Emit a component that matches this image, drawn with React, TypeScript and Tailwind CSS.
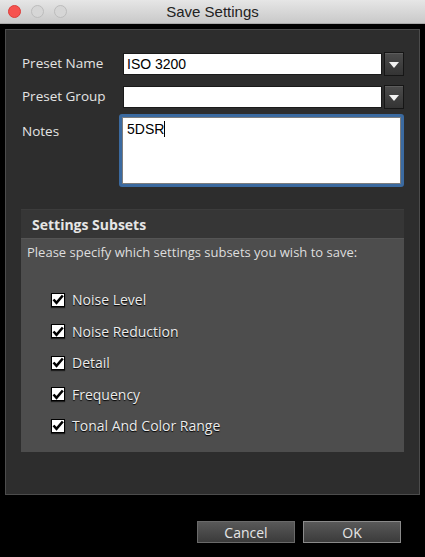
import React from 'react';

const subsets = ['Noise Level', 'Noise Reduction', 'Detail', 'Frequency', 'Tonal And Color Range'];

// Little white triangle on the dark combo buttons
function ComboButton() {
  return (
    <div className="w-[20px] h-[24px] flex items-center justify-center border border-[#161616] bg-gradient-to-b from-[#4c4c4c] to-[#343434] shadow-[inset_0_1px_0_#5c5c5c]">
      <svg width="10" height="6" viewBox="0 0 10 6" className="mt-[2px]">
        <path d="M0 0 H10 L5 6 Z" fill="#f2f2f2" />
      </svg>
    </div>
  );
}

function CheckBox() {
  return (
    <div className="w-[14px] h-[14px] bg-white border border-black shadow-[0_1px_1px_rgba(0,0,0,0.6)] flex items-center justify-center">
      <svg width="12" height="11" viewBox="0 0 12 11">
        <path d="M1.5 5.5 L4.5 8.8 L10.8 1.5" fill="none" stroke="#000" strokeWidth="2.6" strokeLinejoin="miter" />
      </svg>
    </div>
  );
}

function WinButton({ label, primary }: { label: string; primary?: boolean }) {
  return (
    <button
      className={`w-[98px] h-[22px] flex items-center justify-center text-[14px] text-[#e6e6e6] bg-gradient-to-b from-[#595959] to-[#3b3b3b] border ${
        primary ? 'border-[#8a8a8a]' : 'border-[#6a6a6a]'
      }`}
      style={{ fontFamily: '"Open Sans", sans-serif' }}
    >
      {label}
    </button>
  );
}

export default function App() {
  return (
    <div className="w-[425px] h-[557px] bg-black flex flex-col overflow-hidden" style={{ fontFamily: '"Open Sans", sans-serif' }}>
      {/* Title bar */}
      <div className="h-[24px] grid grid-cols-[1fr_auto_1fr] items-center bg-gradient-to-b from-[#e6e6e6] to-[#c9c9c9] border-b border-[#a9a9a9]">
        <div className="flex items-center gap-[10px] pl-[8px]">
          <div className="w-[13px] h-[13px] rounded-full bg-[#f6524e] border border-[#dc3e3a]" />
          <div className="w-[13px] h-[13px] rounded-full bg-[#d6d6d6] border border-[#bcbcbc]" />
          <div className="w-[13px] h-[13px] rounded-full bg-[#d6d6d6] border border-[#bcbcbc]" />
        </div>
        <div className="text-[15px] text-[#222] leading-none" style={{ fontFamily: '"Liberation Sans", Arial, sans-serif' }}>
          Save Settings
        </div>
        <div />
      </div>

      {/* Main panel */}
      <div className="mx-[5px] mt-[5px] h-[466px] border border-[#4c4c4c] bg-[#2d2d2d] px-[15px] pt-[22px] flex flex-col">
        <div className="grid grid-cols-[102px_1fr] gap-y-[9px] items-start">
          <div className="pl-[1px] pt-[1px] text-[13.5px] text-[#e4e4e4] leading-[20px]">Preset Name</div>
          <div className="flex items-center gap-[2px]">
            <div
              className="flex-1 h-[22px] bg-white border border-[#1a1a1a] flex items-center pl-[3px] text-[14px] text-black"
              style={{ fontFamily: '"Liberation Sans", Arial, sans-serif' }}
            >
              ISO 3200
            </div>
            <ComboButton />
          </div>

          <div className="pl-[1px] pt-[1px] text-[13.5px] text-[#e4e4e4] leading-[20px]">Preset Group</div>
          <div className="flex items-center gap-[2px]">
            <div className="flex-1 h-[22px] bg-white border border-[#1a1a1a]" />
            <ComboButton />
          </div>

          <div className="pl-[1px] pt-[3px] text-[13.5px] text-[#e4e4e4] leading-[20px]">Notes</div>
          <div className="-ml-[4px] -mt-[4px] h-[73px] rounded-[3px] border-[3px] border-[#3b6aa0]">
            <div
              className="h-full bg-white border border-[#7d7d7d] pl-[4px] pt-[3px] text-[14px] text-black leading-[17px] flex items-start"
              style={{ fontFamily: '"Liberation Sans", Arial, sans-serif' }}
            >
              5DSR<span className="inline-block w-px h-[16px] bg-black" />
            </div>
          </div>
        </div>

        {/* Settings subsets */}
        <div className="mt-[22px] flex flex-col">
          <div className="h-[29px] bg-[#363636] border-t border-[#3c3c3c] flex items-center pl-[11px] text-[14px] font-bold text-[#e6e6e6]">
            Settings Subsets
          </div>
          <div className="h-[214px] bg-[#4d4d4d] border-t border-[#555] pt-[5px] pl-[6px] flex flex-col">
            <div className="text-[13px] leading-[17px] text-[#dedede]">Please specify which settings subsets you wish to save:</div>
            <div className="mt-[23px] pl-[24px] flex flex-col">
              {subsets.map((s) => (
                <div key={s} className="h-[31.5px] flex items-center gap-[7px]">
                  <CheckBox />
                  <span className="text-[14px] text-[#ececec] [text-shadow:0_1px_1px_#000]">{s}</span>
                </div>
              ))}
            </div>
          </div>
        </div>
      </div>

      {/* Buttons */}
      <div className="mt-[26px] flex justify-end gap-[8px] pr-[24px]">
        <WinButton label="Cancel" />
        <WinButton label="OK" primary />
      </div>
    </div>
  );
}
